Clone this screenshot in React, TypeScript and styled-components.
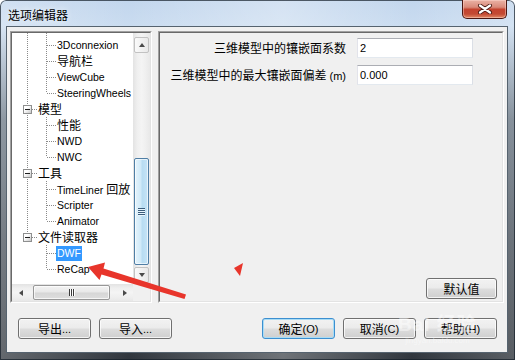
import React from "react";
import styled, { createGlobalStyle, css } from "styled-components";

const GlobalStyle = createGlobalStyle`
  html, body {
    margin: 0;
    padding: 0;
    background: #ffffff;
    overflow: hidden;
  }
  body {
    font-family: "Liberation Sans", "Noto Sans CJK SC", sans-serif;
  }
`;

type Guide = "none" | "line" | "tee" | "corner" | "boxTee" | "boxCorner";

type TreeRow = { guides: Guide[]; text: string; selected?: boolean };

const treeRows: TreeRow[] = [
  { guides: ["line", "tee"], text: "3Dconnexion" },
  { guides: ["line", "tee"], text: "导航栏" },
  { guides: ["line", "tee"], text: "ViewCube" },
  { guides: ["line", "corner"], text: "SteeringWheels" },
  { guides: ["boxTee"], text: "模型" },
  { guides: ["line", "tee"], text: "性能" },
  { guides: ["line", "tee"], text: "NWD" },
  { guides: ["line", "corner"], text: "NWC" },
  { guides: ["boxTee"], text: "工具" },
  { guides: ["line", "tee"], text: "TimeLiner 回放" },
  { guides: ["line", "tee"], text: "Scripter" },
  { guides: ["line", "corner"], text: "Animator" },
  { guides: ["boxCorner"], text: "文件读取器" },
  { guides: ["none", "tee"], text: "DWF", selected: true },
  { guides: ["none", "corner"], text: "ReCap" },
];

const dotV = "repeating-linear-gradient(to bottom, #8a8a8a 0 1px, transparent 1px 2px)";
const dotH = "repeating-linear-gradient(to right, #8a8a8a 0 1px, transparent 1px 2px)";

// chinese runs get the CJK face at 12px, latin stays small like Tahoma
const Han = styled.span`
  font-family: "Noto Sans CJK SC", sans-serif;
  font-size: 12px;
`;

const Mixed = ({ text }: { text: string }) => (
  <>
    {text
      .split(/([\u3000-\u9fff\uff00-\uffef]+)/)
      .map((part, i) => (i % 2 ? <Han key={i}>{part}</Han> : part))}
  </>
);

const Window = styled.div`
  position: relative;
  width: 515px;
  height: 360px;
  display: flex;
  flex-direction: column;
  box-sizing: border-box;
  border-radius: 6px 6px 0 0;
  overflow: hidden;
  font-family: "Liberation Sans", "Noto Sans CJK SC", sans-serif;
  font-size: 11px;
  color: #000;
  background:
    linear-gradient(to right, rgba(255, 255, 255, 0.25), transparent 25%, rgba(255, 255, 255, 0.3) 55%, transparent 80%, rgba(255, 255, 255, 0.2)),
    linear-gradient(to bottom, #c2d6ed 0, #cadcf0 26px, #a5b6c8 60px, #6a7784 120px, #49525c 240px, #30363d 360px);
  box-shadow: inset 0 0 0 1px rgba(20, 30, 40, 0.7);
`;

const TitleBar = styled.div`
  flex: none;
  height: 27px;
  display: flex;
  align-items: flex-start;
`;

const Title = styled.div`
  margin: 7px 0 0 8px;
  line-height: 16px;
  text-shadow: 0 0 6px rgba(255, 255, 255, 0.9);
`;

const CloseButton = styled.div`
  margin-left: auto;
  margin-right: 8px;
  width: 45px;
  height: 19px;
  box-sizing: border-box;
  border: 1px solid #4a1712;
  border-top: none;
  border-radius: 0 0 5px 5px;
  background: linear-gradient(to bottom, #eab2a5 0%, #d98a7a 40%, #c4432f 52%, #c34a33 78%, #e28a66 100%);
  box-shadow: inset 0 0 0 1px rgba(255, 220, 210, 0.45);
  display: flex;
  align-items: center;
  justify-content: center;
`;

const Client = styled.div`
  flex: 1;
  min-height: 0;
  margin: 0 8px 8px 7px;
  padding: 4px 3px 0;
  background: #f0f0f0;
  box-shadow: 0 0 0 1px #56636f;
  display: flex;
  flex-direction: column;
`;

const TopRow = styled.div`
  display: flex;
  gap: 6px;
  height: 272px;
  flex: none;
`;

const SunkenOuter = styled.div<{ $w?: number }>`
  box-sizing: border-box;
  display: flex;
  border: 1px solid;
  border-color: #a0a0a0 #ffffff #ffffff #a0a0a0;
  ${({ $w }) => ($w ? css`width: ${$w}px; flex: none;` : css`flex: 1;`)}
`;

const TreeBox = styled.div`
  flex: 1;
  min-width: 0;
  border: 1px solid;
  border-color: #696969 #e3e3e3 #e3e3e3 #696969;
  background: #ffffff;
  display: grid;
  grid-template-columns: 1fr 17px;
  grid-template-rows: 1fr 17px;
`;

const TreeView = styled.div`
  overflow: hidden;
  padding-left: 6px;
  display: flex;
  flex-direction: column;
`;

const Row = styled.div<{ $h?: number }>`
  display: flex;
  height: ${({ $h }) => $h ?? 16}px;
  flex: none;
`;

const GuideCell = styled.span<{ $kind: Guide }>`
  position: relative;
  flex: none;
  width: 19px;
  box-sizing: border-box;
  padding-left: 5px;
  display: flex;
  align-items: center;

  &::before {
    content: "";
    position: absolute;
    left: 9px;
    top: 0;
    width: 1px;
    bottom: ${({ $kind }) => ($kind === "corner" || $kind === "boxCorner" ? "8px" : "0")};
    background: ${dotV};
    display: ${({ $kind }) => ($kind === "none" ? "none" : "block")};
  }

  &::after {
    content: "";
    position: absolute;
    left: 10px;
    right: 0;
    top: 8px;
    height: 1px;
    background: ${dotH};
    display: ${({ $kind }) => ($kind === "none" || $kind === "line" ? "none" : "block")};
  }
`;

const Expander = styled.span`
  position: relative;
  z-index: 1;
  width: 9px;
  height: 9px;
  margin-top: 1px;
  box-sizing: border-box;
  border: 1px solid #8e8f8f;
  background: linear-gradient(135deg, #ffffff 35%, #c9c9c9);
  display: flex;
  align-items: center;
  justify-content: center;

  &::before {
    content: "";
    width: 5px;
    height: 1px;
    background: #1e1e1e;
  }
`;

const NodeLabel = styled.span<{ $selected?: boolean }>`
  align-self: center;
  padding: 0 1px;
  font-size: 10.5px;
  line-height: 15px;
  white-space: nowrap;
  ${({ $selected }) =>
    $selected &&
    css`
      background: #3399ff;
      color: #ffffff;
    `}
`;

const VScroll = styled.div`
  display: flex;
  flex-direction: column;
  padding: 4px 0 1px;
  background: linear-gradient(to right, #e3e3e3 0, #efefef 25%, #f4f4f4 50%, #efefef 75%, #e8e8e8 100%);
`;

const VButton = styled.div`
  flex: none;
  height: 16px;
  margin: 0 1px;
  box-sizing: border-box;
  border: 1px solid #c2c2c2;
  border-radius: 2px;
  background: linear-gradient(to right, #fafafa, #e9e9e9);
  display: flex;
  align-items: center;
  justify-content: center;
`;

const VThumb = styled.div`
  flex: none;
  margin: auto 1px 2px;
  height: 107px;
  box-sizing: border-box;
  border: 1px solid #4f7ea5;
  border-radius: 2px;
  background: linear-gradient(to right, #e5f4fc 0, #cfe9f8 45%, #b7dcf2 55%, #c6e4f6 100%);
  box-shadow: inset 0 0 0 1px rgba(255, 255, 255, 0.6);
  display: flex;
  flex-direction: column;
  align-items: center;
  justify-content: center;
  gap: 1px;
`;

const GripH = styled.span`
  width: 7px;
  height: 1px;
  background: #3b5d7c;
  box-shadow: 0 1px 0 #e8f5fd;
`;

const HScroll = styled.div`
  display: flex;
  align-items: center;
  background: linear-gradient(to bottom, #e3e3e3 0, #efefef 25%, #f4f4f4 50%, #efefef 75%, #e8e8e8 100%);
`;

const HButton = styled.div`
  flex: none;
  width: 17px;
  height: 17px;
  display: flex;
  align-items: center;
  justify-content: center;
`;

const HThumb = styled.div`
  flex: none;
  margin: 0 auto 0 4px;
  width: 77px;
  height: 15px;
  box-sizing: border-box;
  border: 1px solid #979797;
  border-radius: 2px;
  background: linear-gradient(to bottom, #f3f3f3 0, #e8e8e8 48%, #d6d6d6 52%, #dedede 100%);
  box-shadow: inset 0 0 0 1px rgba(255, 255, 255, 0.7);
  display: flex;
  align-items: center;
  justify-content: center;
  gap: 1px;
`;

const GripV = styled.span`
  width: 1px;
  height: 7px;
  background: #3c3c3c;
  box-shadow: 1px 0 0 #ffffff;
`;

const ScrollCorner = styled.div`
  background: #f0f0f0;
`;

const Arrow = styled.span<{ $dir: "up" | "down" | "left" | "right" }>`
  width: 0;
  height: 0;
  border-style: solid;
  ${({ $dir }) =>
    ({
      up: css`border-width: 0 3.5px 4px; border-color: transparent transparent #4a4a4a;`,
      down: css`border-width: 4px 3.5px 0; border-color: #4a4a4a transparent transparent;`,
      left: css`border-width: 3.5px 4px 3.5px 0; border-color: transparent #4a4a4a transparent transparent;`,
      right: css`border-width: 3.5px 0 3.5px 4px; border-color: transparent transparent transparent #4a4a4a;`,
    })[$dir]}
`;

const Panel = styled.div`
  flex: 1;
  border: 1px solid;
  border-color: #696969 #e3e3e3 #e3e3e3 #696969;
  display: flex;
  flex-direction: column;
  padding-top: 5px;
`;

const FieldGrid = styled.div`
  display: grid;
  grid-template-columns: 1fr 116px;
  column-gap: 11px;
  row-gap: 7px;
  align-items: center;
  padding-right: 29px;
`;

const FieldLabel = styled.span`
  justify-self: end;
  white-space: nowrap;
  line-height: 16px;
`;

const TextBox = styled.div`
  height: 20px;
  box-sizing: border-box;
  border: 1px solid;
  border-color: #abadb3 #dbdfe6 #e3e9ef #e2e3ea;
  background: #ffffff;
  padding: 0 2px;
  line-height: 18px;
`;

const Button = styled.div<{ $w?: number; $focus?: boolean }>`
  flex: none;
  width: ${({ $w }) => $w ?? 73}px;
  height: 21px;
  box-sizing: border-box;
  border: 1px solid #707070;
  border-radius: 3px;
  background: linear-gradient(to bottom, #f2f2f2 0%, #ebebeb 48%, #dddddd 52%, #cfcfcf 100%);
  box-shadow: inset 0 0 0 1px rgba(255, 255, 255, 0.75);
  display: flex;
  align-items: center;
  justify-content: center;
  line-height: 16px;
  white-space: nowrap;
  ${({ $focus }) =>
    $focus &&
    css`
      border-color: #3c8fd0;
      box-shadow: inset 0 0 0 1px #a9dcf5;
    `}
`;

const DefaultsButton = styled(Button)`
  margin: auto 5px 2px auto;
`;

const BottomRow = styled.div`
  display: flex;
  gap: 8px;
  margin-top: 15px;
  padding: 0 7px 0 8px;
`;

const Spacer = styled.div`
  flex: 1;
`;

const Overlay = styled.svg`
  position: absolute;
  left: 0;
  top: 0;
  pointer-events: none;
`;

const Watermark = styled.div`
  position: absolute;
  left: 398px;
  top: 314px;
  pointer-events: none;
  color: rgba(255, 255, 255, 0.45);
  display: flex;
  flex-direction: column;
  align-items: center;
`;

const WatermarkBrand = styled.span`
  font-size: 19px;
  font-weight: bold;
  line-height: 22px;
  letter-spacing: 1px;
`;

const WatermarkUrl = styled.span`
  font-size: 8px;
  line-height: 10px;
`;

export default function App() {
  return (
    <>
      <GlobalStyle />
      <Window>
        <TitleBar>
          <Title>
            <Mixed text="选项编辑器" />
          </Title>
          <CloseButton>
            <svg width="16" height="10" viewBox="0 0 16 10">
              <path d="M3 1.5 L13 8.5 M13 1.5 L3 8.5" stroke="#4b1a14" strokeWidth="4" strokeLinecap="round" />
              <path d="M3 1.5 L13 8.5 M13 1.5 L3 8.5" stroke="#ffffff" strokeWidth="2.2" strokeLinecap="round" />
            </svg>
          </CloseButton>
        </TitleBar>

        <Client>
          <TopRow>
            <SunkenOuter $w={142}>
              <TreeBox>
                <TreeView>
                  <Row $h={4}>
                    <GuideCell $kind="line" />
                    <GuideCell $kind="line" />
                  </Row>
                  {treeRows.map((row) => (
                    <Row key={row.text}>
                      {row.guides.map((g, i) => (
                        <GuideCell key={i} $kind={g}>
                          {(g === "boxTee" || g === "boxCorner") && <Expander />}
                        </GuideCell>
                      ))}
                      <NodeLabel $selected={row.selected}>
                        <Mixed text={row.text} />
                      </NodeLabel>
                    </Row>
                  ))}
                </TreeView>
                <VScroll>
                  <VButton>
                    <Arrow $dir="up" />
                  </VButton>
                  <VThumb>
                    <GripH />
                    <GripH />
                    <GripH />
                    <GripH />
                  </VThumb>
                  <VButton>
                    <Arrow $dir="down" />
                  </VButton>
                </VScroll>
                <HScroll>
                  <HButton>
                    <Arrow $dir="left" />
                  </HButton>
                  <HThumb>
                    <GripV />
                    <GripV />
                    <GripV />
                  </HThumb>
                  <HButton>
                    <Arrow $dir="right" />
                  </HButton>
                </HScroll>
                <ScrollCorner />
              </TreeBox>
            </SunkenOuter>

            <SunkenOuter>
              <Panel>
                <FieldGrid>
                  <FieldLabel>
                    <Mixed text="三维模型中的镶嵌面系数" />
                  </FieldLabel>
                  <TextBox>2</TextBox>
                  <FieldLabel>
                    <Mixed text="三维模型中的最大镶嵌面偏差 (m)" />
                  </FieldLabel>
                  <TextBox>0.000</TextBox>
                </FieldGrid>
                <DefaultsButton $w={71}>
                  <Mixed text="默认值" />
                </DefaultsButton>
              </Panel>
            </SunkenOuter>
          </TopRow>

          <BottomRow>
            <Button>
              <Mixed text="导出..." />
            </Button>
            <Button>
              <Mixed text="导入..." />
            </Button>
            <Spacer />
            <Button $focus>
              <Mixed text="确定(O)" />
            </Button>
            <Button>
              <Mixed text="取消(C)" />
            </Button>
            <Button>
              <Mixed text="帮助(H)" />
            </Button>
          </BottomRow>
        </Client>

        <Watermark>
          <WatermarkBrand>Bai 经验</WatermarkBrand>
          <WatermarkUrl>jingyan.baidu.com</WatermarkUrl>
        </Watermark>

        <Overlay width="515" height="360" viewBox="0 0 515 360">
          <polygon
            points="88,267 105,262.5 103.5,268.5 186,294.5 184.5,299 101.5,274.5 99.5,280"
            fill="#e8352b"
          />
          <polygon points="234,268 243,263 240,276" fill="#e8352b" />
        </Overlay>
      </Window>
    </>
  );
}
